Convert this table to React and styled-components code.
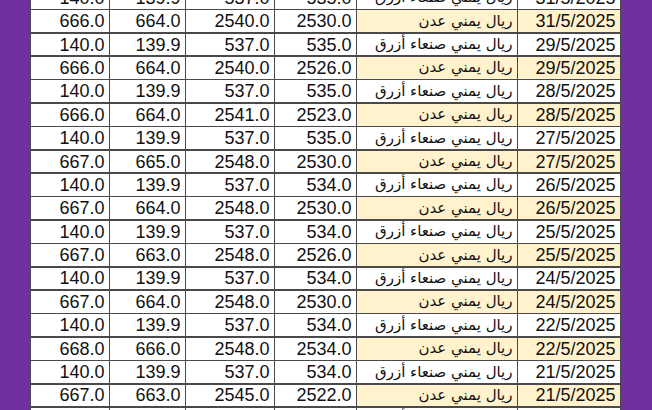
import React from "react";
import styled, { createGlobalStyle } from "styled-components";

const GlobalStyle = createGlobalStyle`
  html, body {
    margin: 0;
    padding: 0;
    background: #7030a0;
    overflow: hidden;
  }
`;

const SANAA = "ريال يمني صنعاء أزرق";
const ADEN = "ريال يمني عدن";

const rows = [
  ["140.0", "139.9", "537.0", "535.0", SANAA, "31/5/2025"],
  ["666.0", "664.0", "2540.0", "2530.0", ADEN, "31/5/2025"],
  ["140.0", "139.9", "537.0", "535.0", SANAA, "29/5/2025"],
  ["666.0", "664.0", "2540.0", "2526.0", ADEN, "29/5/2025"],
  ["140.0", "139.9", "537.0", "535.0", SANAA, "28/5/2025"],
  ["666.0", "664.0", "2541.0", "2523.0", ADEN, "28/5/2025"],
  ["140.0", "139.9", "537.0", "535.0", SANAA, "27/5/2025"],
  ["667.0", "665.0", "2548.0", "2530.0", ADEN, "27/5/2025"],
  ["140.0", "139.9", "537.0", "534.0", SANAA, "26/5/2025"],
  ["667.0", "664.0", "2548.0", "2530.0", ADEN, "26/5/2025"],
  ["140.0", "139.9", "537.0", "534.0", SANAA, "25/5/2025"],
  ["667.0", "663.0", "2548.0", "2526.0", ADEN, "25/5/2025"],
  ["140.0", "139.9", "537.0", "534.0", SANAA, "24/5/2025"],
  ["667.0", "664.0", "2548.0", "2530.0", ADEN, "24/5/2025"],
  ["140.0", "139.9", "537.0", "534.0", SANAA, "22/5/2025"],
  ["668.0", "666.0", "2548.0", "2534.0", ADEN, "22/5/2025"],
  ["140.0", "139.9", "537.0", "534.0", SANAA, "21/5/2025"],
  ["667.0", "663.0", "2545.0", "2522.0", ADEN, "21/5/2025"],
  ["140.0", "139.9", "537.0", "534.0", SANAA, "20/5/2025"],
];

const Page = styled.div`
  height: 410px;
  padding-left: 30.2px;
  overflow: hidden;
`;

const Sheet = styled.div`
  display: grid;
  grid-template-columns: 77.4px 74.4px 87.4px 80.4px 159.4px 101.4px;
  grid-auto-rows: 21.8px;
  gap: 1.6px;
  width: max-content;
  margin-top: -14.1px;
  background: #4a4a4a;
  border: 1.6px solid #4a4a4a;
  font-family: "Liberation Sans", Arial, "DejaVu Sans", sans-serif;
  font-size: 18px;
  color: #111;
`;

const Cell = styled.div`
  display: flex;
  align-items: center;
  justify-content: flex-end;
  padding: 0 4px;
  background: ${(p) => (p.$gold ? "#fff2cc" : "#fff")};
  white-space: nowrap;
  overflow: hidden;
  line-height: 1;
`;

const Label = styled(Cell)`
  direction: rtl;
  justify-content: flex-start;
  font-family: "DejaVu Sans", sans-serif;
  font-size: 15px;
`;

export default function App() {
  return (
    <>
      <GlobalStyle />
      <Page>
        <Sheet>
          {rows.map((r, i) => {
            const gold = r[4] === ADEN;
            return (
              <React.Fragment key={i}>
                <Cell>{r[0]}</Cell>
                <Cell>{r[1]}</Cell>
                <Cell>{r[2]}</Cell>
                <Cell>{r[3]}</Cell>
                <Label $gold={gold}>{r[4]}</Label>
                <Cell $gold={gold}>{r[5]}</Cell>
              </React.Fragment>
            );
          })}
        </Sheet>
      </Page>
    </>
  );
}
